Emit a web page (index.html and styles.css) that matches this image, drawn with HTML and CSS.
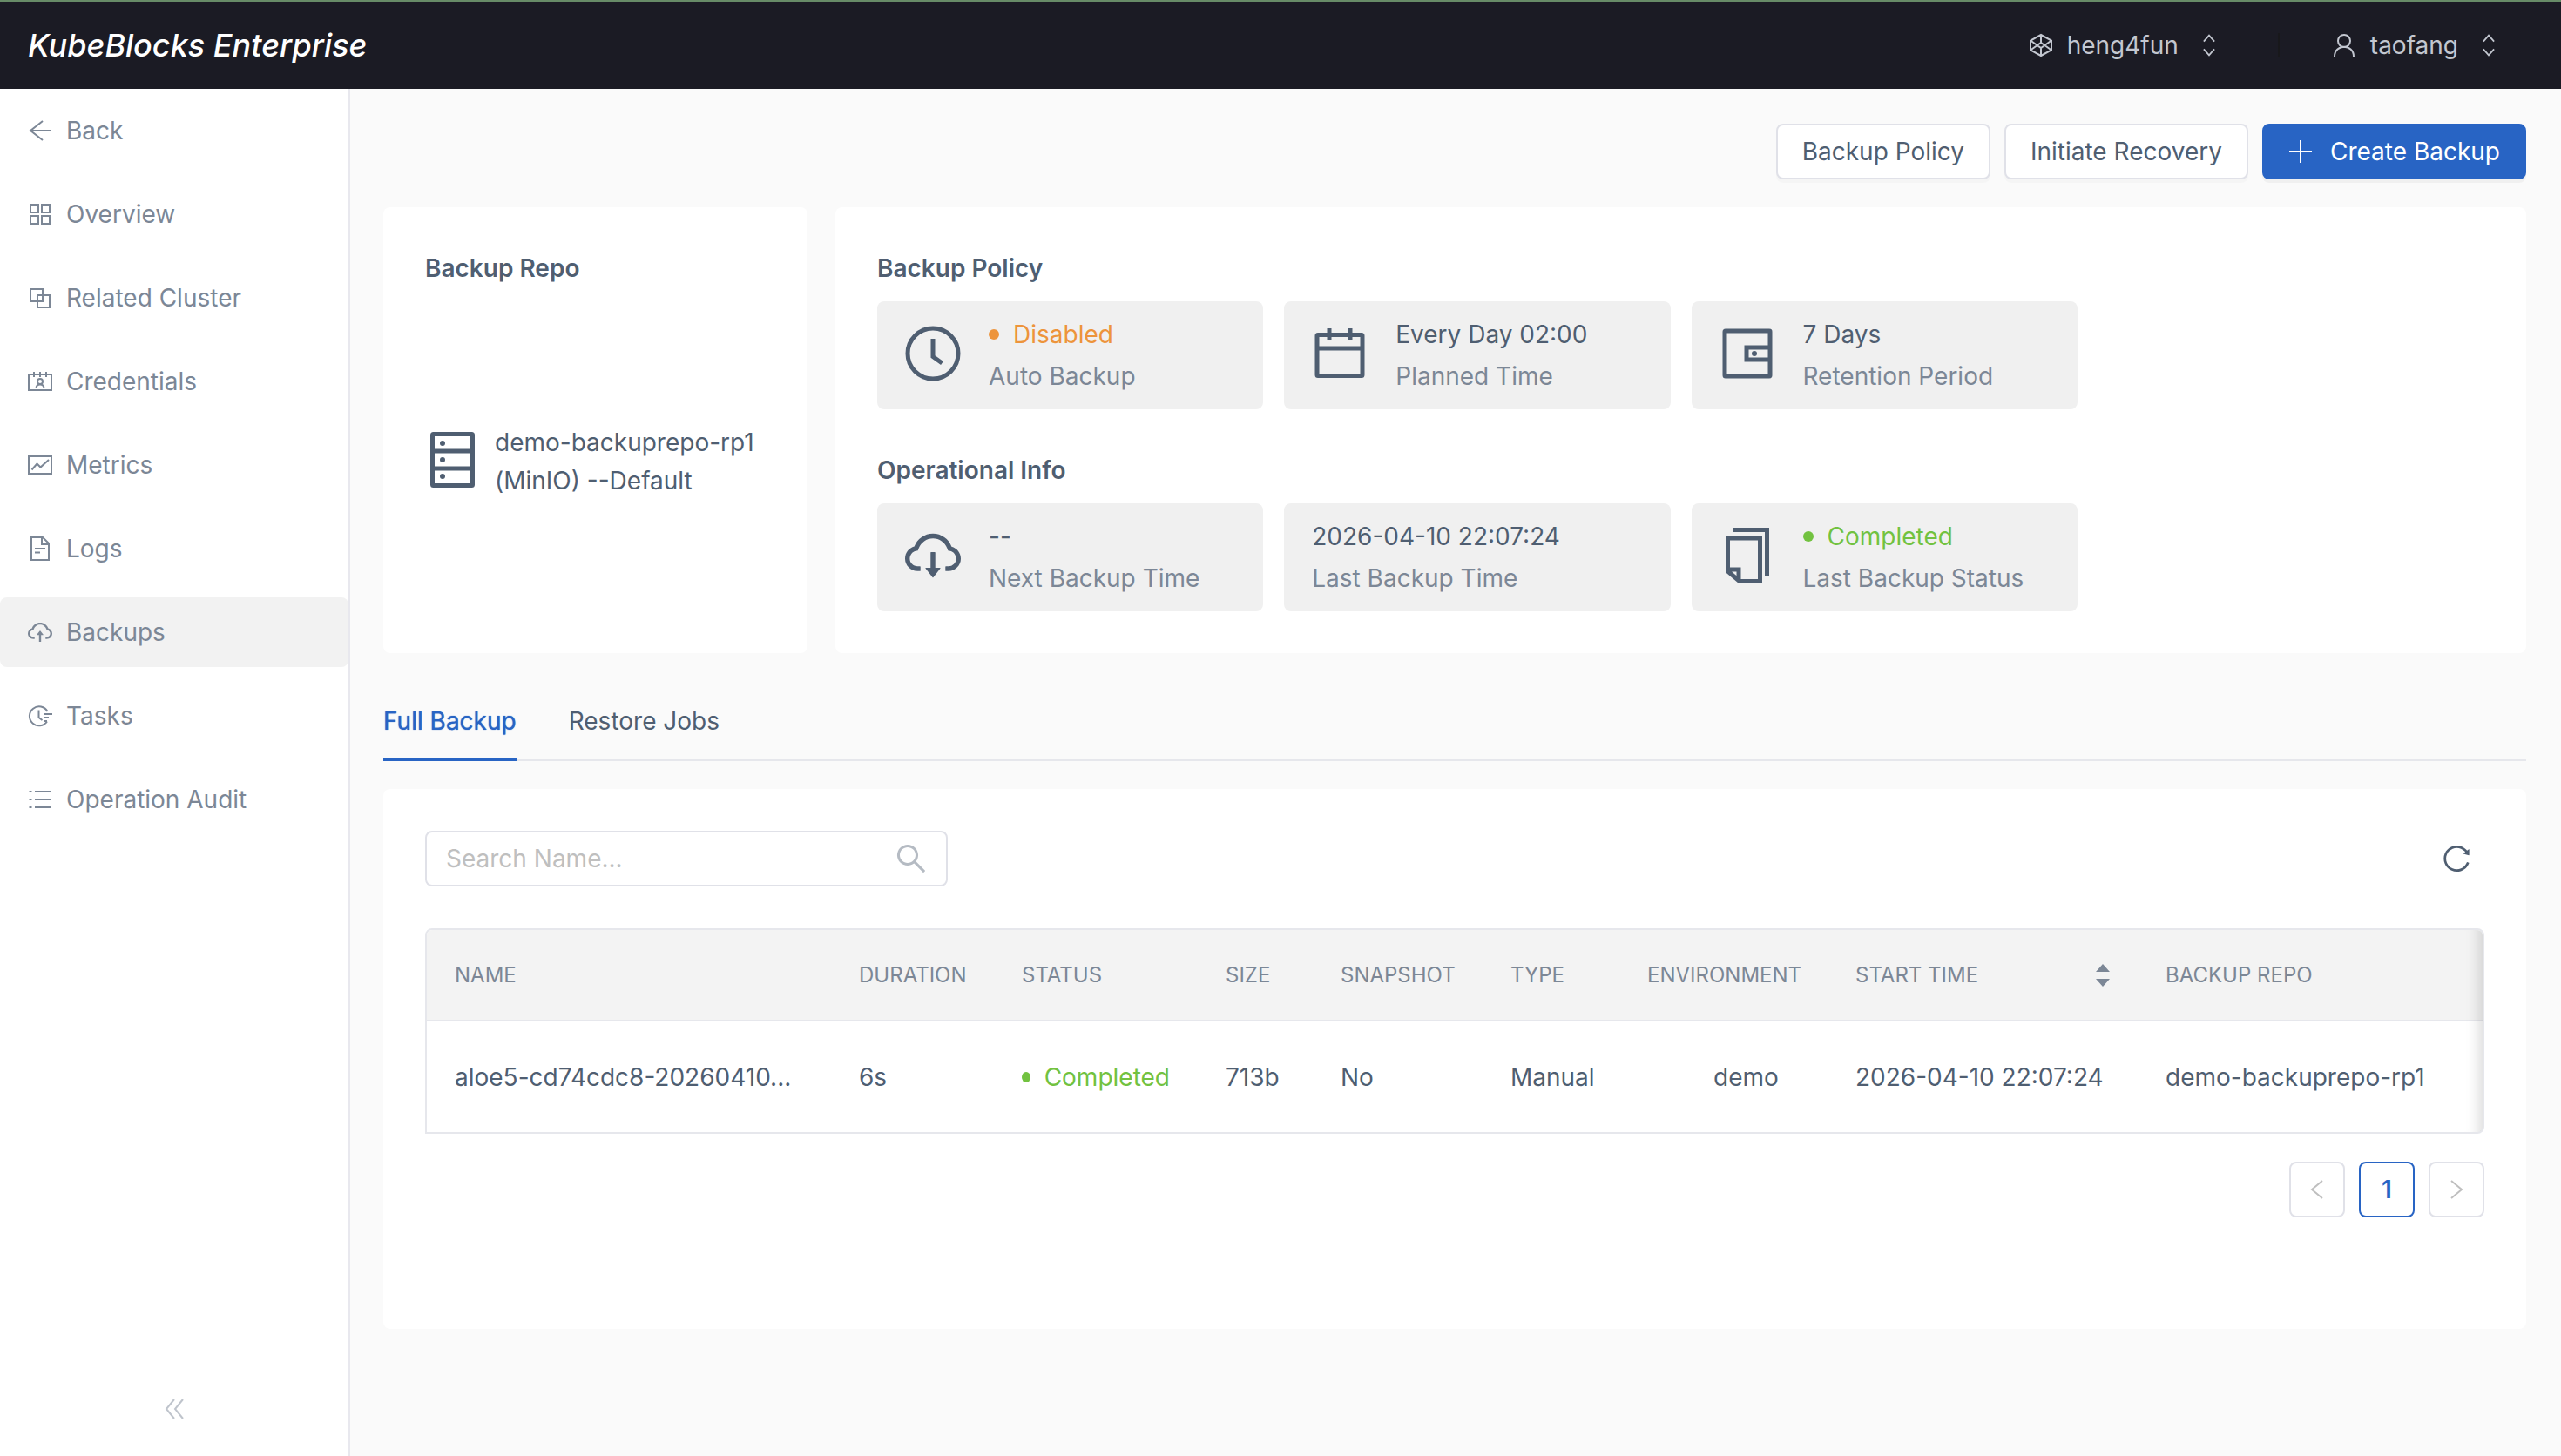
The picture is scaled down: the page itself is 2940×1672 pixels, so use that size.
FILE: index.html
```html
<!DOCTYPE html>
<html lang="en">
<head>
<meta charset="utf-8">
<title>Backups - KubeBlocks Enterprise</title>
<link rel="stylesheet" href="styles.css">
</head>
<body>
<header class="topbar">
  <a class="brand" href="#">KubeBlocks Enterprise</a>
  <div class="account">
    <button class="switcher" type="button">
      <svg class="icon" viewBox="0 0 28 28"><path d="M14 2 26 8.500V19.500L14 26 2 19.500V8.500ZM2 8.500 14 17 26 8.500M2 19.500 14 11 26 19.500M14 2V11M14 17V26"/></svg>
      heng4fun
      <svg class="chevrons" viewBox="0 0 16 28"><path d="M1 9 8 1 15 9M1 19 8 27 15 19"/></svg>
    </button>
    <span class="divider"></span>
    <button class="switcher" type="button">
      <svg class="icon" viewBox="0 0 28 28"><circle cx="14" cy="9" r="7"/><path d="M3 27C3 12 25 12 25 27"/></svg>
      taofang
      <svg class="chevrons" viewBox="0 0 16 28"><path d="M1 9 8 1 15 9M1 19 8 27 15 19"/></svg>
    </button>
  </div>
</header>
<div class="shell">
  <nav class="sidebar">
    <ul class="menu">
      <li><a class="menu-item" href="#"><svg class="icon" viewBox="0 0 28 28"><path d="M17 3 3 14 17 25M3 14H26"/></svg>Back</a></li>
      <li><a class="menu-item" href="#"><svg class="icon" viewBox="0 0 28 28"><path d="M3 3H12V12H3ZM16 3H25V12H16ZM3 16H12V25H3ZM16 16H25V25H16Z"/></svg>Overview</a></li>
      <li><a class="menu-item" href="#"><svg class="icon" viewBox="0 0 28 28"><path d="M3 4H17V18H3ZM11 11H25V25H11Z"/></svg>Related Cluster</a></li>
      <li><a class="menu-item" href="#"><svg class="icon" viewBox="0 0 28 28"><path d="M1 6H27V24H1ZM7 3V9M14 3V9M21 3V9M9.500 21.500C10 16 18 16 18.500 21.500"/><circle cx="14" cy="14" r="3"/></svg>Credentials</a></li>
      <li><a class="menu-item" href="#"><svg class="icon" viewBox="0 0 28 28"><path d="M1 4H27V24H1ZM4.500 19.500 10.500 12.500 14.500 16.500 24 8"/></svg>Metrics</a></li>
      <li><a class="menu-item" href="#"><svg class="icon" viewBox="0 0 28 28"><path d="M4 1H17L24 8V27H4ZM16 1V9H24M8 14H20M8 18.500H14"/></svg>Logs</a></li>
      <li><a class="menu-item active" href="#" aria-current="page"><svg class="icon solid" viewBox="64 64 896 896"><path d="M518.3 459a8 8 0 00-12.600 0l-112 141.700a7.980 7.980 0 006.300 12.900h73.900V856c0 4.400 3.600 8 8 8h60c4.400 0 8-3.600 8-8V613.700H624c6.700 0 10.400-7.700 6.300-12.900L518.300 459z"/><path d="M811.4 366.7C765.6 245.9 648.9 160 512.2 160S258.8 245.8 213 366.6C127.3 389.1 64 467.2 64 560c0 110.5 89.5 200 199.9 200H304c4.4 0 8-3.6 8-8v-60c0-4.4-3.6-8-8-8h-40.1c-33.7 0-65.4-13.4-89-37.7-23.5-24.2-36-56.8-34.9-90.6.9-26.4 9.9-51.2 26.2-72.1 16.7-21.3 40.1-36.8 66.1-43.7l37.9-9.9 13.9-36.6c8.6-22.8 20.6-44.1 35.7-63.4a245.6 245.6 0 0152.4-49.9c41.1-28.9 89.5-44.2 140-44.2s98.9 15.3 140 44.2c19.9 14 37.5 30.8 52.4 49.9 15.1 19.3 27.1 40.7 35.7 63.4l13.8 36.5 37.8 10C846.1 454.5 884 503.8 884 560c0 33.1-12.9 64.3-36.3 87.7a123.07 123.07 0 01-87.6 36.3H720c-4.4 0-8 3.6-8 8v60c0 4.4 3.6 8 8 8h40.1C870.5 760 960 670.5 960 560c0-92.7-63.1-170.7-148.6-193.3z"/></svg>Backups</a></li>
      <li><a class="menu-item" href="#"><svg class="icon" viewBox="0 0 28 28"><path d="M22.500 9A11 11 0 1 0 22 20.500M12.500 7.500V16L16.500 19M19 12H28M19 16H24M19 20H22"/></svg>Tasks</a></li>
      <li><a class="menu-item" href="#"><svg class="icon" viewBox="0 0 28 28"><path d="M8 5H27M8 14H27M8 23H27M1.500 5H4.500M1.500 14H4.500M1.500 23H4.500"/></svg>Operation Audit</a></li>
    </ul>
    <button class="collapse" type="button" aria-label="Collapse menu"><svg class="icon" viewBox="0 0 28 28"><path d="M14 3 5 14 14 25M24 3 15 14 24 25"/></svg></button>
  </nav>
  <main class="content">
    <div class="actions">
      <button class="btn" type="button">Backup Policy</button>
      <button class="btn" type="button">Initiate Recovery</button>
      <button class="btn primary" type="button"><svg class="icon" viewBox="0 0 28 28"><path d="M14 1V27M1 14H27"/></svg>Create Backup</button>
    </div>
    <div class="summary">
      <section class="card repo">
        <h2 class="heading">Backup Repo</h2>
        <div class="repo-body">
          <svg class="big-icon" viewBox="0 0 64 64"><rect x="8.500" y="2.500" width="46" height="59" rx="1"/><path d="M8 22H55M8 42H55"/><g class="dots"><circle cx="20" cy="13" r="3"/><circle cx="20" cy="32" r="3"/><circle cx="20" cy="51" r="3"/></g></svg>
          <p class="repo-name">demo-backuprepo-rp1 (MinIO) --Default</p>
        </div>
      </section>
      <section class="card policy">
        <h2 class="heading">Backup Policy</h2>
        <div class="tiles">
          <div class="tile">
            <svg class="big-icon" viewBox="0 0 64 64"><circle cx="32" cy="32" r="29"/><path d="M32 15V35.500L42.500 43"/></svg>
            <dl class="fact"><dd class="status warn">Disabled</dd><dt>Auto Backup</dt></dl>
          </div>
          <div class="tile">
            <svg class="big-icon" viewBox="0 0 64 64"><rect x="6" y="10.500" width="52" height="47" rx="1"/><path d="M6 26H58M20 3V17M44 3V17"/></svg>
            <dl class="fact"><dd>Every Day 02:00</dd><dt>Planned Time</dt></dl>
          </div>
          <div class="tile">
            <svg class="big-icon" viewBox="0 0 64 64"><rect x="6" y="6" width="52" height="52" rx="1"/><path d="M58 25H31V39H58"/><g class="dots"><circle cx="40" cy="32" r="3"/></g></svg>
            <dl class="fact"><dd>7 Days</dd><dt>Retention Period</dt></dl>
          </div>
        </div>
        <h2 class="heading second">Operational Info</h2>
        <div class="tiles">
          <div class="tile">
            <svg class="big-icon solid" viewBox="64 64 896 896"><path d="M624 706.3h-74.1V464c0-4.4-3.6-8-8-8h-60c-4.4 0-8 3.6-8 8v242.3H400c-6.7 0-10.4 7.7-6.3 12.9l112 141.7a8 8 0 0012.6 0l112-141.7c4.1-5.2.4-12.9-6.3-12.9z"/><path d="M811.4 366.9C765.6 246 648.9 160 512.2 160S258.8 245.8 213 366.6C127.3 389.1 64 467.2 64 560c0 110.5 89.5 200 199.9 200H304c4.4 0 8-3.6 8-8v-60c0-4.4-3.6-8-8-8h-40.1c-33.7 0-65.4-13.4-89-37.7-23.5-24.2-36-56.8-34.9-90.6.9-26.4 9.9-51.2 26.2-72.1 16.7-21.3 40.1-36.8 66.1-43.7l37.9-9.9 13.9-36.6c8.6-22.8 20.6-44.1 35.7-63.4a245.6 245.6 0 0152.4-49.9c41.1-28.9 89.5-44.2 140-44.2s98.9 15.3 140 44.2c19.9 14 37.5 30.8 52.4 49.9 15.1 19.3 27.1 40.7 35.7 63.4l13.8 36.5 37.8 10C846.1 454.5 884 503.8 884 560c0 33.1-12.9 64.3-36.3 87.7a123.07 123.07 0 01-87.6 36.3H720c-4.4 0-8 3.6-8 8v60c0 4.4 3.6 8 8 8h40.1C870.5 760 960 670.5 960 560c0-92.700-63.100-170.700-148.600-193.100z"/></svg>
            <dl class="fact"><dd>--</dd><dt>Next Backup Time</dt></dl>
          </div>
          <div class="tile">
            <dl class="fact"><dd>2026-04-10 22:07:24</dd><dt>Last Backup Time</dt></dl>
          </div>
          <div class="tile">
            <svg class="big-icon" viewBox="0 0 64 64"><path d="M16 2.500H54.500V55M9.500 12H46.500V61.500H23L9.500 50ZM9.500 48H22V61.500"/></svg>
            <dl class="fact"><dd class="status ok">Completed</dd><dt>Last Backup Status</dt></dl>
          </div>
        </div>
      </section>
    </div>
    <div class="tabs" role="tablist">
      <button class="tab selected" type="button" role="tab" aria-selected="true">Full Backup</button>
      <button class="tab" type="button" role="tab" aria-selected="false">Restore Jobs</button>
    </div>
    <section class="card list">
      <div class="toolbar">
        <label class="search">
          <input type="text" placeholder="Search Name..." aria-label="Search Name">
          <svg class="search-icon" viewBox="64 64 896 896"><path d="M909.6 854.5L649.9 594.8C690.2 542.7 712 479 712 412c0-80.2-31.3-155.4-87.9-212.1-56.6-56.7-132-87.9-212.1-87.9s-155.5 31.3-212.1 87.9C143.2 256.5 112 331.8 112 412c0 80.1 31.3 155.5 87.9 212.1C256.5 680.8 331.8 712 412 712c67 0 130.6-21.8 182.7-62l259.7 259.6a8.2 8.2 0 0011.6 0l43.6-43.5a8.2 8.2 0 000-11.6zM570.4 570.4C528 612.7 471.8 636 412 636s-116-23.3-158.4-65.6C211.3 528 188 471.8 188 412s23.3-116.1 65.6-158.4C296 211.3 352.2 188 412 188s116.1 23.2 158.4 65.6S636 352.2 636 412s-23.3 116.1-65.6 158.4z"/></svg>
        </label>
        <button class="refresh" type="button" aria-label="Refresh"><svg viewBox="64 64 896 896"><path d="M909.1 209.3l-56.4 44.1C775.8 155.1 656.2 92 521.9 92 290 92 102.3 279.5 102 511.5 101.7 743.7 289.8 932 521.9 932c181.3 0 335.8-115 394.6-276.1 1.5-4.2-.7-8.9-4.9-10.3l-56.7-19.5a8 8 0 00-10.1 4.8c-1.8 5-3.8 10-5.9 14.9-17.3 41-42.1 77.8-73.7 109.4A344.77 344.77 0 01655.9 829c-42.3 17.9-87.4 27-133.8 27-46.5 0-91.5-9.1-133.8-27A341.5 341.5 0 01279 755.2a342.16 342.16 0 01-73.7-109.4c-17.9-42.4-27-87.4-27-133.9s9.1-91.5 27-133.9c17.3-41 42.1-77.8 73.7-109.4 31.6-31.6 68.4-56.4 109.3-73.8 42.3-17.9 87.4-27 133.8-27 46.5 0 91.5 9.1 133.8 27a341.5 341.5 0 01109.3 73.8c9.9 9.9 19.2 20.4 27.8 31.4l-60.2 47a8 8 0 003 14.1l175.6 43c5 1.2 9.9-2.6 9.9-7.7l.8-180.9c-.1-6.6-7.8-10.3-13-6.2z"/></svg></button>
      </div>
      <div class="table-wrap">
        <table class="table">
          <colgroup><col class="c-name"><col class="c-duration"><col class="c-status"><col class="c-size"><col class="c-snapshot"><col class="c-type"><col class="c-env"><col class="c-start"><col></colgroup>
          <thead>
            <tr><th>NAME</th><th>DURATION</th><th>STATUS</th><th>SIZE</th><th>SNAPSHOT</th><th>TYPE</th><th>ENVIRONMENT</th><th><div class="sortable">START TIME<svg class="sorter" viewBox="0 0 16 26"><path d="M8 0 16 9H0ZM8 26 0 17H16Z"/></svg></div></th><th>BACKUP REPO</th></tr>
          </thead>
          <tbody>
            <tr><td>aloe5-cd74cdc8-20260410...</td><td>6s</td><td><span class="status ok">Completed</span></td><td>713b</td><td>No</td><td>Manual</td><td class="env">demo</td><td>2026-04-10 22:07:24</td><td>demo-backuprepo-rp1</td></tr>
          </tbody>
        </table>
      </div>
      <div class="pager">
        <button class="page" type="button" aria-label="Previous page" disabled><svg class="icon" viewBox="0 0 28 28"><path d="M20 4 8 14 20 24"/></svg></button>
        <button class="page current" type="button" aria-current="page">1</button>
        <button class="page" type="button" aria-label="Next page" disabled><svg class="icon" viewBox="0 0 28 28"><path d="M8 4 20 14 8 24"/></svg></button>
      </div>
    </section>
  </main>
</div>
</body>
</html>
```
FILE: styles.css
```css
:root {
  --text: #4f5e71;
  --muted: #7c8796;
  --blue: #2864c4;
  --line: #e6e7ec;
  --control: #e0e1e8;
}

* { box-sizing: border-box; }

body {
  margin: 0;
  min-height: 100vh;
  display: flex;
  flex-direction: column;
  background: #fafafa;
  color: var(--text);
  font: 28px/44px Inter, "Liberation Sans", sans-serif;
}

h2, p, ul, dl, dd { margin: 0; padding: 0; }
ul { list-style: none; }
a { color: inherit; text-decoration: none; }

button {
  font: inherit;
  color: inherit;
  background: none;
  border: 0;
  margin: 0;
  padding: 0;
}

svg { display: block; flex: none; }

.icon, .chevrons {
  width: 28px;
  height: 28px;
  fill: none;
  stroke: currentColor;
  stroke-width: 2;
}
.chevrons { width: 14px; margin-left: 12px; }
.icon.solid, .big-icon.solid { fill: currentColor; stroke: none; }

/* Top bar */
.topbar {
  height: 102px;
  border-top: 2px solid #678b67;
  background: #1b1b24;
  display: flex;
  align-items: center;
  justify-content: space-between;
  padding: 0 76px 0 32px;
}
.brand {
  color: #fff;
  font: italic 500 36px/48px Inter, sans-serif;
}
.account { display: flex; align-items: center; }
.switcher {
  display: flex;
  align-items: center;
  gap: 16px;
  color: #c3c7d0;
}
.divider {
  width: 2px;
  height: 28px;
  margin: 0 60px 0 72px;
  background: #18181b;
}

/* Sidebar */
.shell { flex: 1; display: flex; }
.sidebar {
  width: 402px;
  flex: none;
  display: flex;
  flex-direction: column;
  justify-content: space-between;
  align-items: stretch;
  padding: 8px 0 40px;
  background: #fff;
  border-right: 2px solid #e8e8ee;
}
.menu { display: grid; gap: 16px; }
.menu-item {
  display: flex;
  align-items: center;
  gap: 16px;
  height: 80px;
  padding: 0 32px;
  border-radius: 8px;
  color: var(--muted);
}
.menu-item.active { background: #f2f2f2; }
.collapse { align-self: center; color: #bfc4cc; }

/* Page */
.content { flex: 1; min-width: 0; padding: 40px 40px 40px 38px; }
.actions { display: flex; justify-content: flex-end; gap: 16px; }
.btn {
  height: 64px;
  padding: 0 28px;
  display: flex;
  align-items: center;
  gap: 20px;
  background: #fff;
  border: 2px solid var(--control);
  border-radius: 8px;
  box-shadow: 0 4px 0 rgba(0, 0, 0, 0.02);
}
.btn.primary {
  color: #fff;
  background: var(--blue);
  border-color: var(--blue);
  box-shadow: 0 4px 0 rgba(0, 0, 0, 0.04);
}

.card { background: #fff; border-radius: 8px; padding: 48px; }
.summary { display: flex; gap: 32px; margin-top: 32px; }
.heading { font-size: 28px; line-height: 44px; font-weight: 600; }

.repo { width: 487px; flex: none; display: flex; flex-direction: column; }
.repo-body { flex: 1; display: flex; align-items: center; gap: 16px; padding-top: 28px; }

.big-icon {
  width: 64px;
  height: 64px;
  fill: none;
  stroke: currentColor;
  stroke-width: 5;
}
.dots { fill: currentColor; stroke: none; }

.policy { flex: 1; min-width: 0; }
.tiles {
  display: grid;
  grid-template-columns: repeat(4, 1fr);
  gap: 24px;
  margin-top: 16px;
}
.second { margin-top: 48px; }
.tile {
  height: 124px;
  padding: 0 32px;
  display: flex;
  align-items: center;
  gap: 32px;
  background: #f0f0f0;
  border-radius: 8px;
}
.big-icon { margin-bottom: 4px; }
.fact { display: flex; flex-direction: column; gap: 4px; white-space: nowrap; }
.fact dt { color: var(--muted); }

.status { display: flex; align-items: center; gap: 16px; }
.status::before {
  content: "";
  width: 12px;
  height: 12px;
  border-radius: 50%;
  background: currentColor;
}
.warn { color: #ed943b; }
.ok { color: #72c240; }

/* Tabs */
.tabs {
  display: flex;
  gap: 60px;
  margin: 32px 0;
  border-bottom: 2px solid var(--line);
}
.tab {
  height: 92px;
  padding-top: 4px;
  margin-bottom: -2px;
  border-bottom: 4px solid transparent;
}
.tab.selected { color: var(--blue); border-color: var(--blue); text-shadow: 0 0 1px currentColor; }

/* Backup list */
.list { min-height: 620px; }
.toolbar { display: flex; justify-content: space-between; align-items: center; }
.search {
  width: 600px;
  height: 64px;
  display: flex;
  align-items: center;
  padding: 0 22px;
  border: 2px solid var(--control);
  border-radius: 8px;
}
.search input {
  flex: 1;
  min-width: 0;
  padding: 0;
  border: 0;
  outline: 0;
  background: none;
  color: var(--text);
  font: inherit;
}
.search input::placeholder { color: #bfbfbf; }
.search-icon { width: 36px; height: 36px; fill: #b5bbc3; }
.refresh { padding: 16px; }
.refresh svg { width: 32px; height: 32px; fill: var(--text); }

.table-wrap {
  position: relative;
  margin-top: 48px;
  border: 2px solid var(--line);
  border-radius: 8px 8px 8px 0;
  overflow: hidden;
}
.table-wrap::after {
  content: "";
  position: absolute;
  inset: 0 0 0 auto;
  width: 60px;
  box-shadow: inset -20px 0 16px -16px rgba(0, 0, 0, 0.15);
}
.table {
  width: 100%;
  table-layout: fixed;
  border-collapse: collapse;
  text-align: left;
  white-space: nowrap;
}
.table th {
  height: 104px;
  padding: 0 32px;
  background: #f3f3f3;
  border-bottom: 2px solid var(--line);
  color: var(--muted);
  font-size: 24px;
  font-weight: 400;
}
.table td { height: 128px; padding: 0 32px; }
.table .env { padding-left: 108px; }
.c-name { width: 464px; }
.c-duration { width: 187px; }
.c-status { width: 234px; }
.c-size { width: 132px; }
.c-snapshot { width: 195px; }
.c-type { width: 157px; }
.c-env { width: 239px; }
.c-start { width: 356px; }
.sortable { display: flex; justify-content: space-between; align-items: center; }
.sorter { width: 16px; height: 26px; fill: var(--muted); }

.pager { display: flex; justify-content: flex-end; gap: 16px; margin-top: 32px; }
.page {
  width: 64px;
  height: 64px;
  display: flex;
  align-items: center;
  justify-content: center;
  background: #fff;
  border: 2px solid var(--control);
  border-radius: 8px;
  color: #bfbfbf;
}
.page.current { color: var(--blue); border-color: var(--blue); font-weight: 600; }
```
